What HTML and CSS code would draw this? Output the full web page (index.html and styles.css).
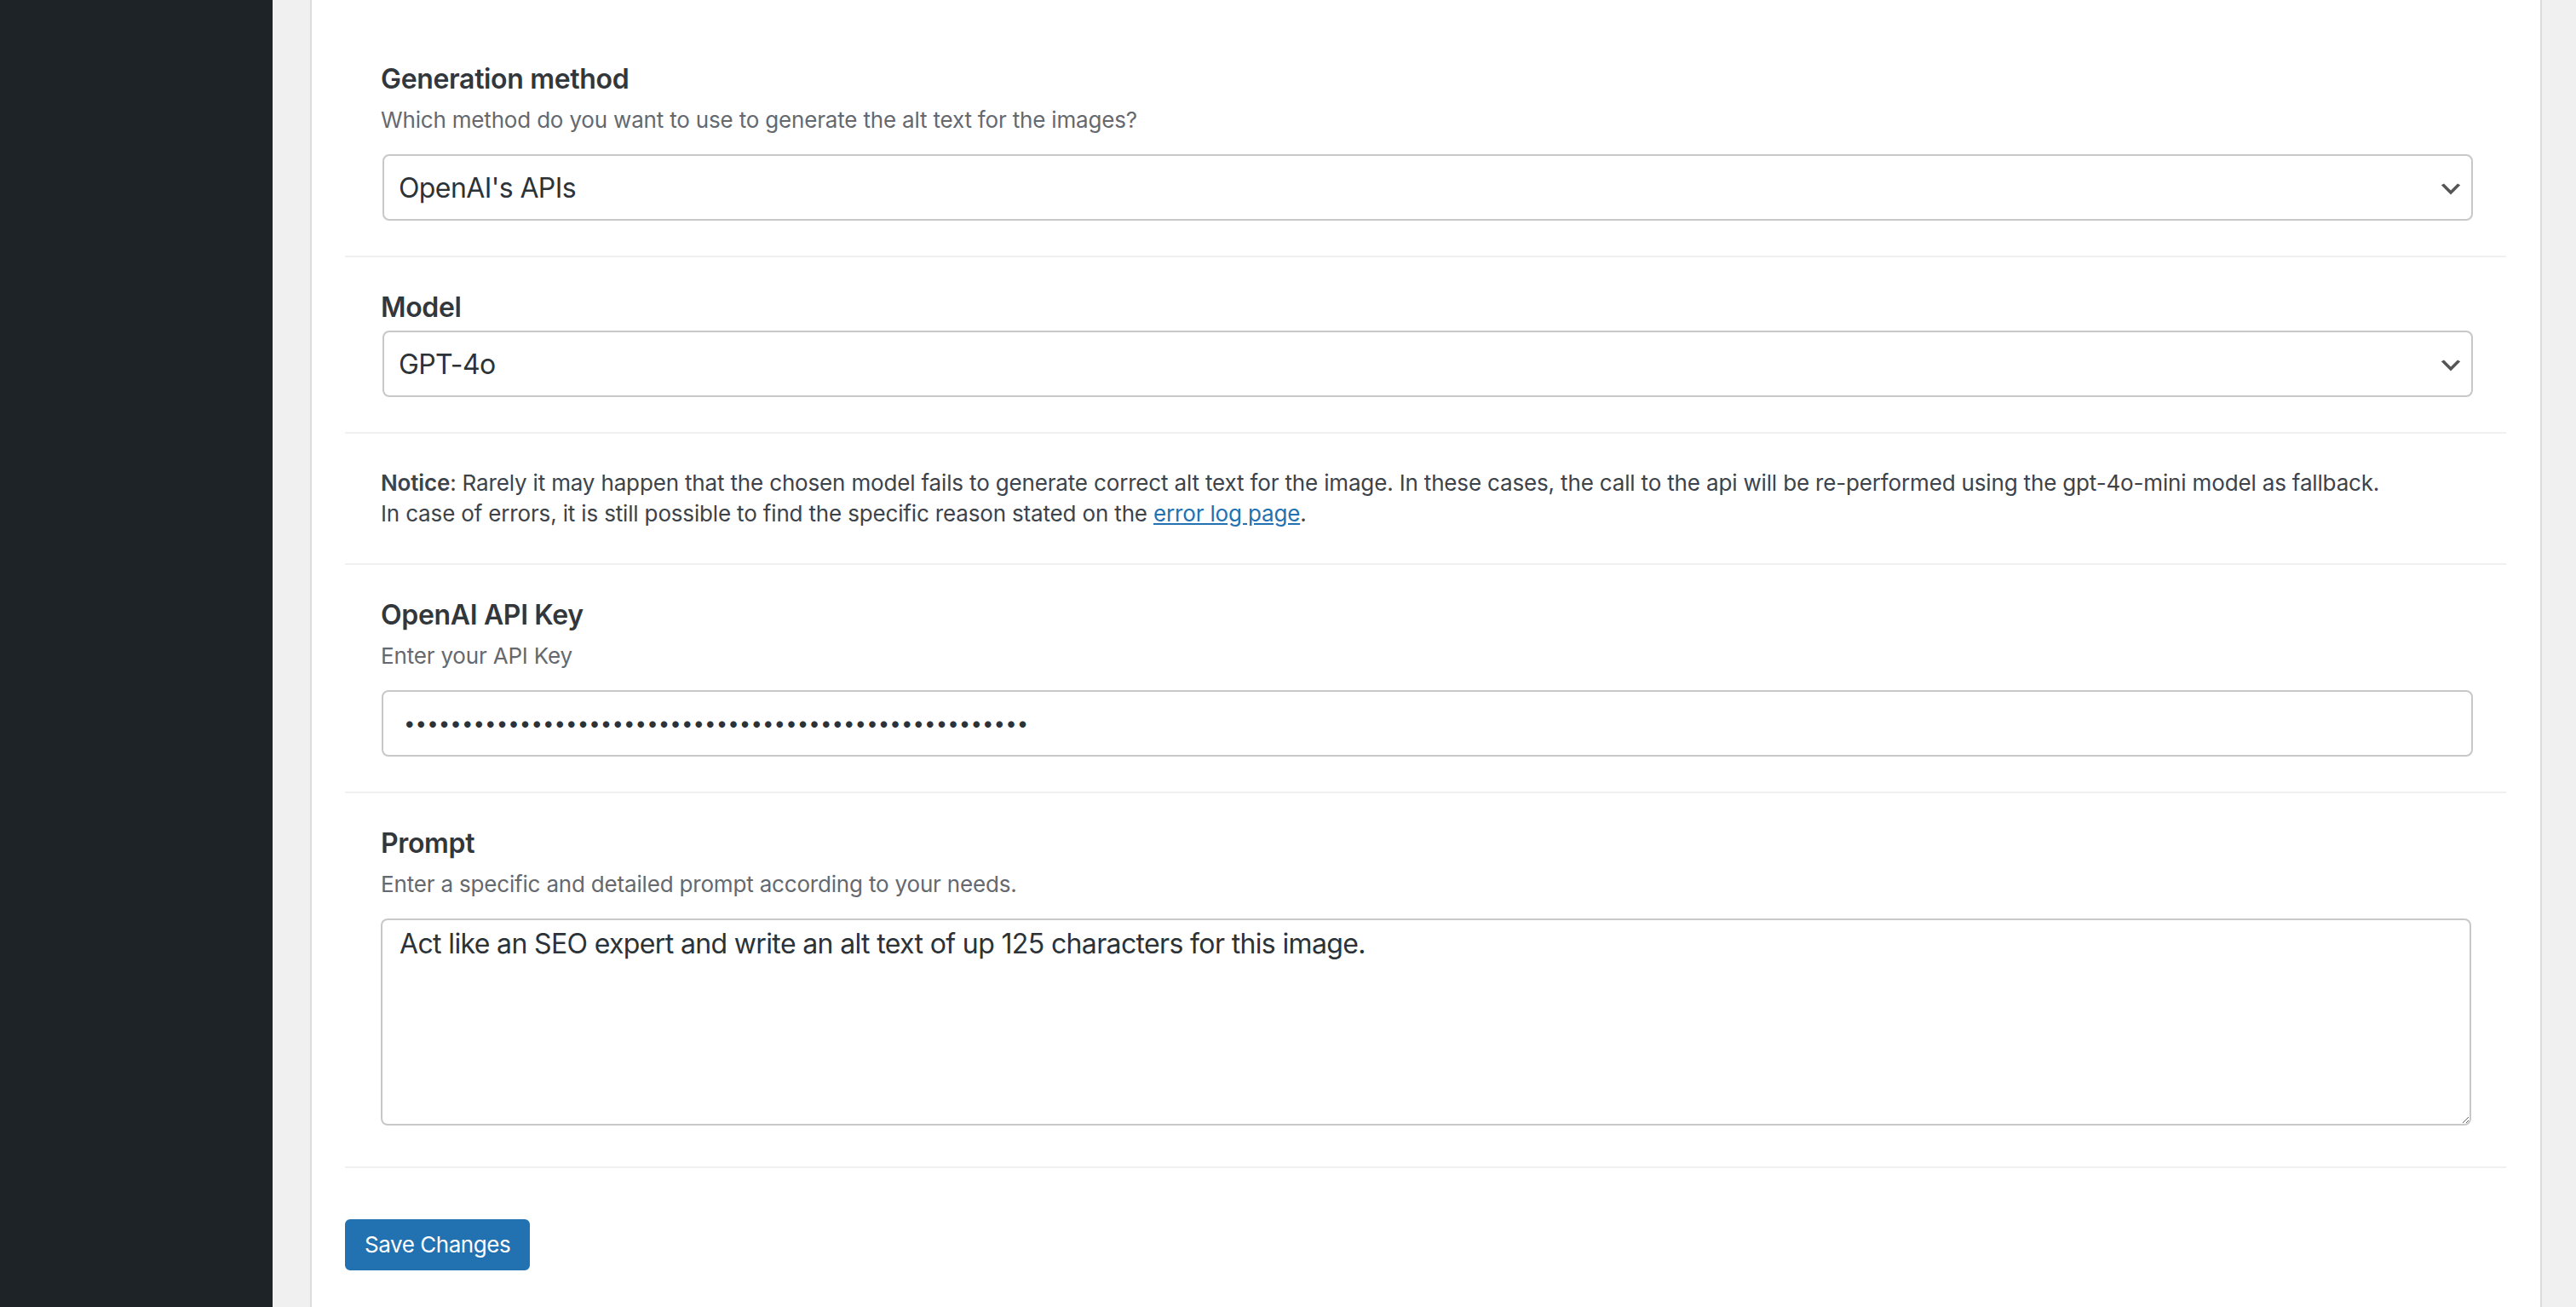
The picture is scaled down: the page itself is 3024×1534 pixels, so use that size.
FILE: index.html
```html
<!DOCTYPE html>
<html lang="en">
<head>
<meta charset="utf-8">
<title>Alt text settings</title>
<link rel="stylesheet" href="styles.css">
</head>
<body>
<div class="layout">
  <aside class="sidebar"></aside>
  <main class="content">
    <div class="card">
      <form class="settings">
        <div class="row">
          <label class="field-title" for="method">Generation method</label>
          <p class="field-desc">Which method do you want to use to generate the alt text for the images?</p>
          <div class="select-wrap">
            <select id="method" class="select"><option>OpenAI's APIs</option></select>
            <svg class="chevron" viewBox="0 0 20 20" width="32" height="32" aria-hidden="true"><path d="M5 6l5 5 5-5 2 1-7 7-7-7 2-1z" fill="#555"/></svg>
          </div>
        </div>
        <div class="row">
          <label class="field-title field-title-tight" for="model">Model</label>
          <div class="select-wrap">
            <select id="model" class="select"><option>GPT-4o</option></select>
            <svg class="chevron" viewBox="0 0 20 20" width="32" height="32" aria-hidden="true"><path d="M5 6l5 5 5-5 2 1-7 7-7-7 2-1z" fill="#555"/></svg>
          </div>
        </div>
        <div class="row row-notice">
          <p class="notice"><strong>Notice</strong>: Rarely it may happen that the chosen model fails to generate correct alt text for the image. In these cases, the call to the api will be re-performed using the gpt-4o-mini model as fallback.<br>In case of errors, it is still possible to find the specific reason stated on the <a href="#" class="link">error log page</a>.</p>
        </div>
        <div class="row">
          <label class="field-title" for="apikey">OpenAI API Key</label>
          <p class="field-desc">Enter your API Key</p>
          <input id="apikey" class="text-input" type="password" value="sk-proj-abcdefghijklmnopqrstuvwxyz0123456789ABCDEFGHIJ">
        </div>
        <div class="row row-prompt">
          <label class="field-title" for="prompt">Prompt</label>
          <p class="field-desc">Enter a specific and detailed prompt according to your needs.</p>
          <textarea id="prompt" class="textarea">Act like an SEO expert and write an alt text of up 125 characters for this image.</textarea>
        </div>
        <div class="actions">
          <button type="button" class="button-primary">Save Changes</button>
        </div>
      </form>
    </div>
  </main>
</div>
</body>
</html>
```

FILE: styles.css
```css
html, body {
  margin: 0;
  padding: 0;
  height: 100%;
}

body {
  font-family: Inter, "Liberation Sans", Arial, sans-serif;
  color: #3c434a;
  background: #f0f0f1;
  overflow: hidden;
}

.layout {
  display: flex;
  height: 100vh;
}

.sidebar {
  width: 320px;
  flex: 0 0 320px;
  background: #1d2327;
}

.content {
  flex: 1;
  background: #f0f0f1;
  padding: 0 40px 0 44px;
  display: flex;
  min-width: 0;
}

.card {
  flex: 1;
  background: #ffffff;
  border-left: 2px solid #dcdcde;
  border-right: 2px solid #dcdcde;
  padding: 34px 40px 0 39px;
  min-width: 0;
}

.settings {
  display: flex;
  flex-direction: column;
}

.row {
  display: flex;
  flex-direction: column;
  padding: 39px 41px 41px 42px;
  border-bottom: 2px solid #f0f0f1;
}

.row-prompt {
  padding-bottom: 48px;
}

.field-title {
  display: block;
  font-size: 32px;
  line-height: 40px;
  font-weight: 600;
  letter-spacing: -0.34px;
  color: #32373c;
  margin: 0 0 10px;
}

.field-title-tight {
  margin-bottom: 7px;
}

.field-desc {
  font-size: 26px;
  line-height: 36px;
  letter-spacing: -0.18px;
  color: #646970;
  margin: 0 0 22px;
}

.select-wrap {
  position: relative;
  margin: 0 -2px 0 2px;
}

.select {
  display: block;
  width: 100%;
  height: 78px;
  box-sizing: border-box;
  -webkit-appearance: none;
  appearance: none;
  background: #ffffff;
  border: 2px solid #c8c8c8;
  border-radius: 8px;
  padding: 0 48px 0 17px;
  font-family: Inter, "Liberation Sans", Arial, sans-serif;
  font-size: 32px;
  letter-spacing: -0.6px;
  color: #2c3338;
  outline: none;
}

.chevron {
  position: absolute;
  right: 10px;
  top: 25px;
  pointer-events: none;
}

.notice {
  font-size: 26px;
  line-height: 36.4px;
  letter-spacing: -0.16px;
  color: #3c434a;
  margin: 0;
}

.notice strong {
  font-weight: 600;
  color: #3c434a;
}

.row-notice {
  padding-top: 40px;
  padding-bottom: 39px;
}

.link {
  color: #2271b1;
  text-decoration: underline;
}

.text-input {
  display: block;
  height: 78px;
  box-sizing: border-box;
  margin: 0 -2px 0 1px;
  width: calc(100% + 1px);
  border: 2px solid #c8c8c8;
  border-radius: 8px;
  padding: 0 16px 0 24px;
  font-family: Inter, "Liberation Sans", Arial, sans-serif;
  font-size: 24px;
  letter-spacing: 0.08px;
  color: #2c3338;
  background: #ffffff;
  outline: none;
}

.textarea {
  display: block;
  width: 100%;
  height: 243px;
  box-sizing: border-box;
  border: 2px solid #c8c8c8;
  border-radius: 8px;
  padding: 4px 20px;
  font-family: Inter, "Liberation Sans", Arial, sans-serif;
  font-size: 32px;
  line-height: 48px;
  letter-spacing: -0.64px;
  color: #2c3338;
  background: #ffffff;
  outline: none;
  margin: 0;
}

.actions {
  padding: 60px 0 0;
}

.button-primary {
  display: inline-block;
  height: 60px;
  box-sizing: border-box;
  padding: 0 21px;
  border: 2px solid #2271b1;
  border-radius: 6px;
  background: #2271b1;
  color: #ffffff;
  font-family: Inter, "Liberation Sans", Arial, sans-serif;
  font-size: 26px;
  line-height: 56px;
  letter-spacing: -0.45px;
  cursor: pointer;
}
```
